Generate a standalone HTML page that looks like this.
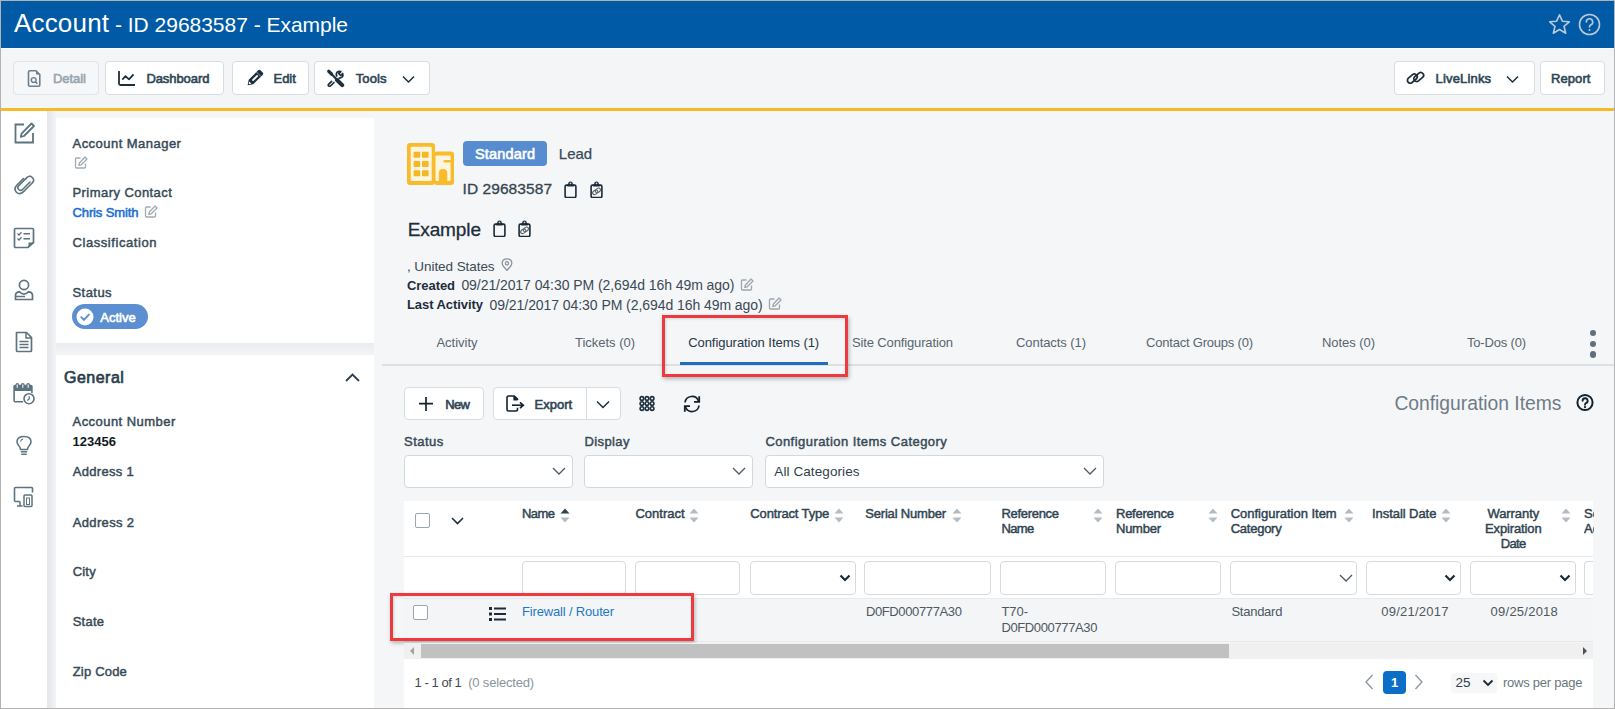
<!DOCTYPE html>
<html><head><meta charset="utf-8"><style>
html,body{margin:0;padding:0;}
body{width:1615px;height:709px;overflow:hidden;position:relative;background:#f5f6f8;font-family:"Liberation Sans",sans-serif;}
body>div,body>svg{position:absolute;}
.t{white-space:nowrap;}
#frame{left:0;top:0;width:1615px;height:709px;box-sizing:border-box;border-style:solid;border-color:#b3b3b3;border-width:1px;pointer-events:none;}
</style></head><body>
<div style="left:1px;top:1px;width:1613px;height:47px;background:#005aa5"></div>
<div style="left:1px;top:48px;width:1613px;height:1px;background:#fbfbfc"></div>
<div class="t" style="left:14.0px;top:9.99px;font-size:26px;line-height:26px;font-weight:400;color:#ffffff;letter-spacing:0.176px;">Account</div>
<div class="t" style="left:115.0px;top:14.22px;font-size:21px;line-height:21px;font-weight:400;color:#ffffff;letter-spacing:-0.020px;">- ID 29683587 - Example</div>
<svg style="left:1548px;top:13px;" width="23" height="22" viewBox="0 0 23 22"><path d="M11.5 1.8 L14.4 8.2 L21.3 8.8 L16 13.3 L17.7 20.2 L11.5 16.5 L5.3 20.2 L7 13.3 L1.7 8.8 L8.6 8.2 Z" fill="none" stroke="#b9c9dc" stroke-width="1.6" stroke-linejoin="round"/></svg>
<svg style="left:1578px;top:13px;" width="23" height="23" viewBox="0 0 23 23"><circle cx="11.5" cy="11.5" r="10" fill="none" stroke="#b9c9dc" stroke-width="1.6"/><path d="M8.3 9 A3.2 3.2 0 1 1 12.6 12 Q11.5 12.6 11.5 14" fill="none" stroke="#b9c9dc" stroke-width="1.6" stroke-linecap="round"/><circle cx="11.5" cy="17" r="1" fill="#b9c9dc"/></svg>
<div style="left:1px;top:49px;width:1613px;height:59px;background:#f4f5f7"></div>
<div style="left:13px;top:61px;width:86px;height:34px;background:#fff;border:1px solid #d8dde1;border-radius:4px;box-sizing:border-box"></div>
<div style="left:105px;top:61px;width:119px;height:34px;background:#fff;border:1px solid #d8dde1;border-radius:4px;box-sizing:border-box"></div>
<div style="left:232px;top:61px;width:77px;height:34px;background:#fff;border:1px solid #d8dde1;border-radius:4px;box-sizing:border-box"></div>
<div style="left:314px;top:61px;width:116px;height:34px;background:#fff;border:1px solid #d8dde1;border-radius:4px;box-sizing:border-box"></div>
<div style="left:13px;top:61px;width:86px;height:34px;background:#f6f7f9;border:1px solid #e1e5e8;border-radius:4px;box-sizing:border-box"></div>
<div style="left:1394px;top:61px;width:141px;height:34px;background:#fff;border:1px solid #d8dde1;border-radius:4px;box-sizing:border-box"></div>
<div style="left:1540px;top:61px;width:65px;height:34px;background:#fff;border:1px solid #d8dde1;border-radius:4px;box-sizing:border-box"></div>
<div class="t" style="left:53.0px;top:71.50px;font-size:13px;line-height:13px;font-weight:400;color:#98a5ae;-webkit-text-stroke:0.6px #98a5ae;letter-spacing:-0.047px;">Detail</div>
<div class="t" style="left:146.4px;top:71.50px;font-size:13px;line-height:13px;font-weight:400;color:#2e4655;-webkit-text-stroke:0.6px #2e4655;letter-spacing:-0.074px;">Dashboard</div>
<div class="t" style="left:273.5px;top:71.50px;font-size:13px;line-height:13px;font-weight:400;color:#2e4655;-webkit-text-stroke:0.6px #2e4655;letter-spacing:-0.034px;">Edit</div>
<div class="t" style="left:355.7px;top:71.50px;font-size:13px;line-height:13px;font-weight:400;color:#2e4655;-webkit-text-stroke:0.6px #2e4655;letter-spacing:0.113px;">Tools</div>
<div class="t" style="left:1435.6px;top:71.50px;font-size:13px;line-height:13px;font-weight:400;color:#2e4655;-webkit-text-stroke:0.6px #2e4655;letter-spacing:0.163px;">LiveLinks</div>
<div class="t" style="left:1551.0px;top:71.50px;font-size:13px;line-height:13px;font-weight:400;color:#2e4655;-webkit-text-stroke:0.6px #2e4655;letter-spacing:0.077px;">Report</div>
<div style="left:1px;top:108px;width:1613px;height:3px;background:#f7b928"></div>
<div style="left:1px;top:111px;width:46px;height:597px;background:#fff"></div>
<div style="left:47px;top:111px;width:9px;height:597px;background:linear-gradient(to right,#e3e5e8,#f3f4f6)"></div>
<div style="left:56px;top:118px;width:318px;height:225px;background:#fff"></div>
<div style="left:56px;top:343px;width:318px;height:12px;background:linear-gradient(#eaebee,#f3f4f6)"></div>
<div style="left:56px;top:355px;width:318px;height:353px;background:#fff"></div>
<div class="t" style="left:72.5px;top:136.50px;font-size:13px;line-height:13px;font-weight:400;color:#374a56;-webkit-text-stroke:0.45px #374a56;letter-spacing:0.465px;">Account Manager</div>
<div class="t" style="left:72.5px;top:186.00px;font-size:13px;line-height:13px;font-weight:400;color:#374a56;-webkit-text-stroke:0.45px #374a56;letter-spacing:0.437px;">Primary Contact</div>
<div class="t" style="left:72.5px;top:206.00px;font-size:13px;line-height:13px;font-weight:400;color:#2170d0;-webkit-text-stroke:0.55px #2170d0;letter-spacing:-0.118px;">Chris Smith</div>
<div class="t" style="left:72.5px;top:235.50px;font-size:13px;line-height:13px;font-weight:400;color:#374a56;-webkit-text-stroke:0.45px #374a56;letter-spacing:0.571px;">Classification</div>
<div class="t" style="left:72.5px;top:285.50px;font-size:13px;line-height:13px;font-weight:400;color:#374a56;-webkit-text-stroke:0.45px #374a56;letter-spacing:0.449px;">Status</div>
<div style="left:72px;top:304px;width:76px;height:25px;background:#5b8fd1;border-radius:13px"></div>
<svg style="left:76px;top:308px;" width="18" height="18" viewBox="0 0 18 18"><circle cx="9" cy="9" r="8.5" fill="#fff"/><path d="M5.2 9.2 L7.9 11.9 L12.9 6.6" fill="none" stroke="#5b8fd1" stroke-width="1.9" stroke-linecap="round" stroke-linejoin="round"/></svg>
<div class="t" style="left:100.2px;top:310.50px;font-size:13px;line-height:13px;font-weight:400;color:#ffffff;-webkit-text-stroke:0.6px #ffffff;letter-spacing:0.020px;">Active</div>
<div class="t" style="left:64.1px;top:370.06px;font-size:16px;line-height:16px;font-weight:400;color:#2b3f4c;-webkit-text-stroke:0.7px #2b3f4c;letter-spacing:0.464px;">General</div>
<svg style="left:344px;top:371px;" width="17" height="12" viewBox="0 0 17 12"><path d="M2 10 L8.5 3.5 L15 10" fill="none" stroke="#2b3f4c" stroke-width="1.8"/></svg>
<div class="t" style="left:72.5px;top:415.00px;font-size:13px;line-height:13px;font-weight:400;color:#374a56;-webkit-text-stroke:0.45px #374a56;letter-spacing:0.460px;">Account Number</div>
<div class="t" style="left:72.5px;top:435.30px;font-size:13px;line-height:13px;font-weight:700;color:#111a22;">123456</div>
<div class="t" style="left:72.7px;top:465.30px;font-size:13px;line-height:13px;font-weight:400;color:#374a56;-webkit-text-stroke:0.45px #374a56;letter-spacing:0.309px;">Address 1</div>
<div class="t" style="left:72.7px;top:515.50px;font-size:13px;line-height:13px;font-weight:400;color:#374a56;-webkit-text-stroke:0.45px #374a56;letter-spacing:0.359px;">Address 2</div>
<div class="t" style="left:72.7px;top:565.00px;font-size:13px;line-height:13px;font-weight:400;color:#374a56;-webkit-text-stroke:0.45px #374a56;letter-spacing:0.204px;">City</div>
<div class="t" style="left:72.7px;top:615.00px;font-size:13px;line-height:13px;font-weight:400;color:#374a56;-webkit-text-stroke:0.45px #374a56;letter-spacing:0.262px;">State</div>
<div class="t" style="left:72.7px;top:665.00px;font-size:13px;line-height:13px;font-weight:400;color:#374a56;-webkit-text-stroke:0.45px #374a56;letter-spacing:0.194px;">Zip Code</div>
<div style="left:463px;top:141px;width:84px;height:25px;background:#578dd0;border-radius:4px"></div>
<div class="t" style="left:474.9px;top:146.53px;font-size:14.5px;line-height:14.5px;font-weight:400;color:#fff;-webkit-text-stroke:0.6px #fff;letter-spacing:0.194px;">Standard</div>
<div class="t" style="left:558.8px;top:146.10px;font-size:15px;line-height:15px;font-weight:400;color:#3a4b57;-webkit-text-stroke:0.25px #3a4b57;letter-spacing:0.011px;">Lead</div>
<div class="t" style="left:462.5px;top:180.88px;font-size:15.5px;line-height:15.5px;font-weight:400;color:#34444f;-webkit-text-stroke:0.3px #34444f;letter-spacing:0.074px;">ID 29683587</div>
<div class="t" style="left:407.7px;top:220.22px;font-size:19px;line-height:19px;font-weight:400;color:#1d2d3a;-webkit-text-stroke:0.3px #1d2d3a;letter-spacing:-0.103px;">Example</div>
<div class="t" style="left:407.0px;top:260.07px;font-size:13.5px;line-height:13.5px;font-weight:400;color:#3b4a55;letter-spacing:-0.067px;">, United States</div>
<div class="t" style="left:407.0px;top:279.10px;font-size:13px;line-height:13px;font-weight:700;color:#1d2d3a;letter-spacing:-0.067px;">Created</div>
<div class="t" style="left:461.4px;top:278.25px;font-size:14px;line-height:14px;font-weight:400;color:#3b4a55;letter-spacing:-0.064px;">09/21/2017 04:30 PM (2,694d 16h 49m ago)</div>
<div class="t" style="left:407.0px;top:298.40px;font-size:13px;line-height:13px;font-weight:700;color:#1d2d3a;letter-spacing:-0.068px;">Last Activity</div>
<div class="t" style="left:489.6px;top:297.55px;font-size:14px;line-height:14px;font-weight:400;color:#3b4a55;letter-spacing:-0.064px;">09/21/2017 04:30 PM (2,694d 16h 49m ago)</div>
<svg style="left:26px;top:69px;" width="16" height="19" viewBox="0 0 16 19"><path d="M2.5 3 Q2.5 1.8 3.7 1.8 L10 1.8 L13.8 5.6 L13.8 16 Q13.8 17.2 12.6 17.2 L3.7 17.2 Q2.5 17.2 2.5 16 Z" fill="none" stroke="#6f7f8a" stroke-width="1.6"/><path d="M10 1.8 L10 5.6 L13.8 5.6 Z" fill="#6f7f8a"/><circle cx="7.7" cy="11" r="2.4" fill="none" stroke="#6f7f8a" stroke-width="1.4"/><path d="M9.4 12.7 L11.4 14.7" stroke="#6f7f8a" stroke-width="1.5"/></svg>
<svg style="left:117px;top:70px;" width="20" height="17" viewBox="0 0 20 17"><path d="M2 1 L2 13.5 Q2 15 3.5 15 L18 15" fill="none" stroke="#1d2f3c" stroke-width="1.8"/><path d="M5.3 9.6 L8.5 6.2 L12 9.4 L16.5 4.4" fill="none" stroke="#1d2f3c" stroke-width="1.7" stroke-linejoin="round"/></svg>
<svg style="left:244px;top:68px;" width="21" height="21" viewBox="0 0 21 21"><g transform="rotate(-45 10.5 10.5)"><path d="M5.5 7.3 L18.8 7.3 Q20.5 7.3 20.5 9 L20.5 12 Q20.5 13.7 18.8 13.7 L5.5 13.7 L0.8 10.5 Z" fill="#1d2f3c"/><rect x="7.5" y="9.6" width="7.5" height="1.9" rx=".7" fill="#fff"/><path d="M4.6 8.8 L2.2 10.5 L4.6 12.2 Z" fill="#fff"/><path d="M2.9 9.7 L1.5 10.5 L2.9 11.3 Z" fill="#1d2f3c"/><path d="M16.5 7.3 L16.5 13.7" stroke="#fff" stroke-width=".5"/></g></svg>
<svg style="left:326px;top:69px;" width="20" height="19" viewBox="0 0 20 19"><path d="M3.5 3 L16 15.8" stroke="#1d2f3c" stroke-width="2.2" stroke-linecap="round"/><path d="M11 11 L16.2 16.2" stroke="#1d2f3c" stroke-width="4" stroke-linecap="round"/><path d="M2.8 2.3 L5.5 5" stroke="#1d2f3c" stroke-width="3.2" stroke-linecap="round"/><path d="M5.6 12.3 L2.6 15.3 Q1.6 16.8 3.2 17.2 Q4.2 17.4 5 16.5 L8 13.5" fill="none" stroke="#1d2f3c" stroke-width="1.7" stroke-linecap="round"/><path d="M11 7.6 Q9.5 5 11.2 3.2 Q12.7 1.8 14.8 2.6 L12.8 4.6 L14.7 6.5 L16.7 4.5 Q17.5 6.6 16 8.2 Q14.5 9.5 12.5 9" fill="none" stroke="#1d2f3c" stroke-width="1.7" stroke-linejoin="round"/></svg>
<svg style="left:402px;top:75px;" width="13" height="9" viewBox="0 0 13 9"><path d="M1 1.5 L6.5 7 L12 1.5" fill="none" stroke="#1d2f3c" stroke-width="1.5"/></svg>
<svg style="left:1406px;top:70px;" width="20" height="16" viewBox="0 0 20 16"><g fill="none" stroke="#1d2f3c" stroke-width="1.7"><rect x="0.8" y="5.8" width="11" height="5.6" rx="2.8" transform="rotate(-40 6.3 8.6)"/><rect x="7.2" y="4.2" width="11" height="5.6" rx="2.8" transform="rotate(-40 12.7 7)"/></g></svg>
<svg style="left:1506px;top:75px;" width="13" height="9" viewBox="0 0 13 9"><path d="M1 1.5 L6.5 7 L12 1.5" fill="none" stroke="#1d2f3c" stroke-width="1.5"/></svg>
<svg style="left:12px;top:121px;" width="24" height="24" viewBox="0 0 24 24"><path d="M12 3.5 L3.5 3.5 L3.5 21.5 L21 21.5 L21 12" fill="none" stroke="#5d737f" stroke-width="1.8"/><path d="M19.5 2.5 L22 5 L12 15 L8.8 15.8 L9.6 12.6 Z" fill="none" stroke="#5d737f" stroke-width="1.8" stroke-linejoin="round"/></svg>
<svg style="left:13px;top:174px;" width="22" height="23" viewBox="0 0 22 23"><path d="M17 8 L9.5 15.5 Q7.6 17.4 5.7 15.5 Q3.8 13.6 5.7 11.7 L13.8 3.6 Q16.6 0.8 19.3 3.5 Q22 6.2 19.2 9 L10.8 17.4 Q6.7 21.5 3.4 18.2 Q0.1 14.9 4.2 10.8 L10.5 4.5" fill="none" stroke="#5d737f" stroke-width="1.6" stroke-linecap="round"/></svg>
<svg style="left:12px;top:226px;" width="24" height="24" viewBox="0 0 24 24"><path d="M2.5 3.5 Q2.5 2.5 3.5 2.5 L20.5 2.5 Q21.5 2.5 21.5 3.5 L21.5 16.5 L16 21.5 L3.5 21.5 Q2.5 21.5 2.5 20.5 Z" fill="none" stroke="#5d737f" stroke-width="1.7"/><path d="M21.5 16.5 L16.5 16.5 L16.5 21.5 Z" fill="#5d737f"/><path d="M5.5 7.5 L7 9 L9.5 6.2 M5.5 12.5 L7 14 L9.5 11.2" fill="none" stroke="#5d737f" stroke-width="1.3"/><path d="M11.5 7.8 L18 7.8 M11.5 12.8 L18 12.8" stroke="#5d737f" stroke-width="1.5"/></svg>
<svg style="left:13px;top:278px;" width="22" height="24" viewBox="0 0 22 24"><circle cx="11" cy="7" r="4.6" fill="none" stroke="#5d737f" stroke-width="1.7"/><path d="M2.5 21.5 L2.5 17.5 Q2.5 13.8 6.5 13.8 Q8.5 16.2 11 16.2 Q13.5 16.2 15.5 13.8 Q19.5 13.8 19.5 17.5 L19.5 21.5 Z" fill="none" stroke="#5d737f" stroke-width="1.7" stroke-linejoin="round"/><path d="M3 18.5 L12 18.5" stroke="#5d737f" stroke-width="1.5"/></svg>
<svg style="left:13px;top:330px;" width="22" height="23" viewBox="0 0 22 23"><path d="M3.5 2.5 L13.5 2.5 L18.5 7.5 L18.5 20.5 Q18.5 21.5 17.5 21.5 L4.5 21.5 Q3.5 21.5 3.5 20.5 Z" fill="none" stroke="#5d737f" stroke-width="1.7" stroke-linejoin="round"/><path d="M13 2.5 L13 8 L18.5 8" fill="none" stroke="#5d737f" stroke-width="1.5"/><path d="M6.5 11.5 L15.5 11.5 M6.5 14.5 L15.5 14.5 M6.5 17.5 L15.5 17.5" stroke="#5d737f" stroke-width="1.4"/></svg>
<svg style="left:12px;top:382px;" width="24" height="24" viewBox="0 0 24 24"><path d="M11 19.7 L3 19.7 Q2.1 19.7 2.1 18.8 L2.1 4.5 Q2.1 3.6 3 3.6 L19 3.6 Q19.9 3.6 19.9 4.5 L19.9 11" fill="none" stroke="#5d737f" stroke-width="1.6"/><rect x="2.1" y="3.6" width="17.8" height="5.4" fill="#5d737f"/><rect x="4.0" y="1.6" width="2.6" height="5" rx="1.3" fill="#cfd8dd" stroke="#5d737f" stroke-width="1.1"/><rect x="9.5" y="1.6" width="2.6" height="5" rx="1.3" fill="#cfd8dd" stroke="#5d737f" stroke-width="1.1"/><rect x="14.899999999999999" y="1.6" width="2.6" height="5" rx="1.3" fill="#cfd8dd" stroke="#5d737f" stroke-width="1.1"/><circle cx="17" cy="16.7" r="5" fill="#fff" stroke="#5d737f" stroke-width="1.6"/><path d="M17.2 14.2 L17.2 17 L15.3 18.6" fill="none" stroke="#5d737f" stroke-width="1.3"/></svg>
<svg style="left:15px;top:435px;" width="18" height="22" viewBox="0 0 18 22"><path d="M5.5 14.5 Q5.5 12.5 4 11 Q2 8.8 2 6.8 Q2 1.5 9 1.5 Q16 1.5 16 6.8 Q16 8.8 14 11 Q12.5 12.5 12.5 14.5 Z" fill="none" stroke="#5d737f" stroke-width="1.6" stroke-linejoin="round"/><path d="M5.8 16.8 L12.2 16.8 M6.3 19.3 L11.7 19.3" stroke="#5d737f" stroke-width="1.5"/><path d="M5.5 6.5 Q6 4.5 8 4" fill="none" stroke="#5d737f" stroke-width="1.1"/></svg>
<svg style="left:12px;top:485px;" width="24" height="24" viewBox="0 0 24 24"><path d="M20.5 7.5 L20.5 3.5 Q20.5 2.5 19.5 2.5 L3.5 2.5 Q2.5 2.5 2.5 3.5 L2.5 15.5 Q2.5 16.5 3.5 16.5 L8 16.5" fill="none" stroke="#5d737f" stroke-width="1.6"/><path d="M5 21 L10.5 21 M8 16.5 L8 21" stroke="#5d737f" stroke-width="1.5"/><rect x="12" y="10" width="8" height="11.5" rx="1" fill="none" stroke="#5d737f" stroke-width="1.5"/><rect x="14.5" y="13" width="3" height="6.5" fill="none" stroke="#5d737f" stroke-width="1"/></svg>
<svg style="left:74px;top:156px;" width="14" height="13" viewBox="0 0 14 13"><path d="M6.5 2 L2.5 2 Q1.5 2 1.5 3 L1.5 11 Q1.5 12 2.5 12 L10.5 12 Q11.5 12 11.5 11 L11.5 7.5" fill="none" stroke="#a3abb2" stroke-width="1.3"/><path d="M11 1 L13 3 L7.2 8.8 L4.8 9.4 L5.4 7 Z" fill="none" stroke="#a3abb2" stroke-width="1.3" stroke-linejoin="round"/></svg>
<svg style="left:144px;top:205px;" width="14" height="13" viewBox="0 0 14 13"><path d="M6.5 2 L2.5 2 Q1.5 2 1.5 3 L1.5 11 Q1.5 12 2.5 12 L10.5 12 Q11.5 12 11.5 11 L11.5 7.5" fill="none" stroke="#a3abb2" stroke-width="1.3"/><path d="M11 1 L13 3 L7.2 8.8 L4.8 9.4 L5.4 7 Z" fill="none" stroke="#a3abb2" stroke-width="1.3" stroke-linejoin="round"/></svg>
<svg style="left:740px;top:278px;" width="14" height="13" viewBox="0 0 14 13"><path d="M6.5 2 L2.5 2 Q1.5 2 1.5 3 L1.5 11 Q1.5 12 2.5 12 L10.5 12 Q11.5 12 11.5 11 L11.5 7.5" fill="none" stroke="#9ea5ab" stroke-width="1.3"/><path d="M11 1 L13 3 L7.2 8.8 L4.8 9.4 L5.4 7 Z" fill="none" stroke="#9ea5ab" stroke-width="1.3" stroke-linejoin="round"/></svg>
<svg style="left:768px;top:297px;" width="14" height="13" viewBox="0 0 14 13"><path d="M6.5 2 L2.5 2 Q1.5 2 1.5 3 L1.5 11 Q1.5 12 2.5 12 L10.5 12 Q11.5 12 11.5 11 L11.5 7.5" fill="none" stroke="#9ea5ab" stroke-width="1.3"/><path d="M11 1 L13 3 L7.2 8.8 L4.8 9.4 L5.4 7 Z" fill="none" stroke="#9ea5ab" stroke-width="1.3" stroke-linejoin="round"/></svg>
<svg style="left:501px;top:258px;" width="12" height="13" viewBox="0 0 12 13"><path d="M6 12.3 Q1.2 7.5 1.2 5.2 Q1.2 0.8 6 0.8 Q10.8 0.8 10.8 5.2 Q10.8 7.5 6 12.3 Z" fill="none" stroke="#8b939a" stroke-width="1.3" stroke-linejoin="round"/><circle cx="6" cy="5.2" r="1.6" fill="none" stroke="#8b939a" stroke-width="1.2"/></svg>
<svg style="left:407px;top:143px;" width="47" height="42" viewBox="0 0 47 42"><rect x="0" y="0" width="28" height="42" rx="3" fill="#f8bb2a"/><rect x="3.7" y="3.7" width="21" height="34.3" rx="1" fill="#fdf5dd"/><rect x="6.6" y="8.8" width="6.6" height="6" rx=".8" fill="#f5b728"/><rect x="6.6" y="18" width="6.6" height="6" rx=".8" fill="#f5b728"/><rect x="6.6" y="27.2" width="6.6" height="6" rx=".8" fill="#f5b728"/><rect x="15" y="8.8" width="6.6" height="6" rx=".8" fill="#f5b728"/><rect x="15" y="18" width="6.6" height="6" rx=".8" fill="#f5b728"/><rect x="15" y="27.2" width="6.6" height="6" rx=".8" fill="#f5b728"/><rect x="27" y="8.5" width="20" height="33.5" rx="3" fill="#f8bb2a"/><rect x="28.5" y="12.5" width="15.1" height="25.5" rx="1" fill="#fdf5dd"/><path d="M31.8 38 L31.8 30 Q31.8 26 36 26 Q40.3 26 40.3 30 L40.3 38 Z" fill="#f8bb2a"/><rect x="36.5" y="17" width="7.5" height="2.6" rx="1.3" fill="#f8bb2a"/></svg>
<svg style="left:564px;top:180.5px;" width="13" height="17" viewBox="0 0 13 17"><path d="M2.5 4.1 L10.5 4.1 Q11.9 4.1 11.9 5.5 L11.9 15.1 Q11.9 16.5 10.5 16.5 L2.5 16.5 Q1.1 16.5 1.1 15.1 L1.1 5.5 Q1.1 4.1 2.5 4.1 Z" fill="none" stroke="#1b2a37" stroke-width="1.6"/><path d="M3.2 5.4 L9.8 5.4 L9.8 3.4 L8.9 3.4 Q8.9 0.4 6.5 0.4 Q4.1 0.4 4.1 3.4 L3.2 3.4 Z" fill="#1b2a37"/><circle cx="6.5" cy="2.3" r=".9" fill="#c9d0d6"/></svg>
<svg style="left:589.5px;top:180.5px;" width="13" height="17" viewBox="0 0 13 17"><path d="M2.5 4.1 L10.5 4.1 Q11.9 4.1 11.9 5.5 L11.9 15.1 Q11.9 16.5 10.5 16.5 L2.5 16.5 Q1.1 16.5 1.1 15.1 L1.1 5.5 Q1.1 4.1 2.5 4.1 Z" fill="none" stroke="#1b2a37" stroke-width="1.6"/><path d="M3.2 5.4 L9.8 5.4 L9.8 3.4 L8.9 3.4 Q8.9 0.4 6.5 0.4 Q4.1 0.4 4.1 3.4 L3.2 3.4 Z" fill="#1b2a37"/><circle cx="6.5" cy="2.3" r=".9" fill="#c9d0d6"/><g fill="none" stroke="#5f676e" stroke-width="1.1"><ellipse cx="5.2" cy="11.3" rx="2.8" ry="1.9" transform="rotate(-35 5.2 11.3)"/><ellipse cx="7.9" cy="9.4" rx="2.8" ry="1.9" transform="rotate(-35 7.9 9.4)"/></g></svg>
<svg style="left:493px;top:219.5px;" width="13" height="17" viewBox="0 0 13 17"><path d="M2.5 4.1 L10.5 4.1 Q11.9 4.1 11.9 5.5 L11.9 15.1 Q11.9 16.5 10.5 16.5 L2.5 16.5 Q1.1 16.5 1.1 15.1 L1.1 5.5 Q1.1 4.1 2.5 4.1 Z" fill="none" stroke="#1b2a37" stroke-width="1.6"/><path d="M3.2 5.4 L9.8 5.4 L9.8 3.4 L8.9 3.4 Q8.9 0.4 6.5 0.4 Q4.1 0.4 4.1 3.4 L3.2 3.4 Z" fill="#1b2a37"/><circle cx="6.5" cy="2.3" r=".9" fill="#c9d0d6"/></svg>
<svg style="left:518px;top:219.5px;" width="13" height="17" viewBox="0 0 13 17"><path d="M2.5 4.1 L10.5 4.1 Q11.9 4.1 11.9 5.5 L11.9 15.1 Q11.9 16.5 10.5 16.5 L2.5 16.5 Q1.1 16.5 1.1 15.1 L1.1 5.5 Q1.1 4.1 2.5 4.1 Z" fill="none" stroke="#1b2a37" stroke-width="1.6"/><path d="M3.2 5.4 L9.8 5.4 L9.8 3.4 L8.9 3.4 Q8.9 0.4 6.5 0.4 Q4.1 0.4 4.1 3.4 L3.2 3.4 Z" fill="#1b2a37"/><circle cx="6.5" cy="2.3" r=".9" fill="#c9d0d6"/><g fill="none" stroke="#5f676e" stroke-width="1.1"><ellipse cx="5.2" cy="11.3" rx="2.8" ry="1.9" transform="rotate(-35 5.2 11.3)"/><ellipse cx="7.9" cy="9.4" rx="2.8" ry="1.9" transform="rotate(-35 7.9 9.4)"/></g></svg>
<div style="left:382px;top:364px;width:1233px;height:2px;background:#dcdfe3"></div>
<div class="t" style="left:436.4px;top:335.80px;font-size:13px;line-height:13px;font-weight:400;color:#58656f;">Activity</div>
<div class="t" style="left:575.0px;top:335.80px;font-size:13px;line-height:13px;font-weight:400;color:#58656f;letter-spacing:-0.019px;">Tickets (0)</div>
<div class="t" style="left:852.0px;top:335.80px;font-size:13px;line-height:13px;font-weight:400;color:#58656f;letter-spacing:-0.137px;">Site Configuration</div>
<div class="t" style="left:1016.0px;top:335.80px;font-size:13px;line-height:13px;font-weight:400;color:#58656f;letter-spacing:-0.072px;">Contacts (1)</div>
<div class="t" style="left:1146.0px;top:335.80px;font-size:13px;line-height:13px;font-weight:400;color:#58656f;letter-spacing:-0.208px;">Contact Groups (0)</div>
<div class="t" style="left:1322.0px;top:335.80px;font-size:13px;line-height:13px;font-weight:400;color:#58656f;letter-spacing:-0.057px;">Notes (0)</div>
<div class="t" style="left:1467.0px;top:335.80px;font-size:13px;line-height:13px;font-weight:400;color:#58656f;letter-spacing:-0.186px;">To-Dos (0)</div>
<div class="t" style="left:688.2px;top:335.80px;font-size:13px;line-height:13px;font-weight:400;color:#263746;letter-spacing:-0.055px;">Configuration Items (1)</div>
<div style="left:680px;top:362px;width:148px;height:3px;background:#1f6dc4"></div>
<div style="left:1589.8px;top:329.95px;width:6.5px;height:6.5px;background:#5d6f80;border-radius:50%"></div>
<div style="left:1589.8px;top:340.75px;width:6.5px;height:6.5px;background:#5d6f80;border-radius:50%"></div>
<div style="left:1589.8px;top:351.25px;width:6.5px;height:6.5px;background:#5d6f80;border-radius:50%"></div>
<div style="left:662px;top:315px;width:186px;height:62px;border:3px solid #ee3a3f;box-sizing:border-box;box-shadow:1px 2px 4px rgba(0,0,0,.28), inset 1px 1px 3px rgba(0,0,0,.12)"></div>
<div style="left:404px;top:387px;width:80px;height:33px;background:#fff;border:1px solid #d8dde1;border-radius:4px;box-sizing:border-box"></div>
<div style="left:493px;top:387px;width:128px;height:33px;background:#fff;border:1px solid #d8dde1;border-radius:4px;box-sizing:border-box"></div>
<div style="left:586px;top:388px;width:1px;height:31px;background:#d8dde1"></div>
<div class="t" style="left:445.3px;top:398.00px;font-size:13px;line-height:13px;font-weight:400;color:#2e4655;-webkit-text-stroke:0.6px #2e4655;letter-spacing:-0.653px;">New</div>
<div class="t" style="left:534.5px;top:398.00px;font-size:13px;line-height:13px;font-weight:400;color:#2e4655;-webkit-text-stroke:0.6px #2e4655;letter-spacing:0.006px;">Export</div>
<svg style="left:418px;top:396px;" width="16" height="16" viewBox="0 0 16 16"><path d="M8 1 L8 15 M1 7.6 L15 7.6" stroke="#13222e" stroke-width="1.7"/></svg>
<svg style="left:506px;top:395px;" width="19" height="17" viewBox="0 0 19 17"><path d="M11.5 5 L11.5 4.2 L8.3 1 L2.7 1 Q1 1 1 2.7 L1 14.3 Q1 16 2.7 16 L9.8 16 Q11.5 16 11.5 14.3 L11.5 12.8" fill="none" stroke="#13222e" stroke-width="1.6"/><path d="M8 1 L8 5 L11.5 5" fill="#13222e" stroke="#13222e" stroke-width="1.2"/><path d="M6 10.2 L16.5 10.2" stroke="#13222e" stroke-width="1.6"/><path d="M14 7.3 L17.3 10.2 L14 13.1" fill="none" stroke="#13222e" stroke-width="1.7"/></svg>
<svg style="left:596px;top:400px;" width="14" height="10" viewBox="0 0 14 10"><path d="M1 1.5 L7 7.5 L13 1.5" fill="none" stroke="#1d2f3c" stroke-width="1.5"/></svg>
<svg style="left:639px;top:395px;" width="18" height="18" viewBox="0 0 18 18"><circle cx="2.9" cy="3.4" r="1.8" fill="none" stroke="#1d2f3c" stroke-width="1.6"/><circle cx="2.9" cy="8.5" r="1.8" fill="none" stroke="#1d2f3c" stroke-width="1.6"/><circle cx="2.9" cy="13.6" r="1.8" fill="none" stroke="#1d2f3c" stroke-width="1.6"/><circle cx="8.0" cy="3.4" r="1.8" fill="none" stroke="#1d2f3c" stroke-width="1.6"/><circle cx="8.0" cy="8.5" r="1.8" fill="none" stroke="#1d2f3c" stroke-width="1.6"/><circle cx="8.0" cy="13.6" r="1.8" fill="none" stroke="#1d2f3c" stroke-width="1.6"/><circle cx="13.1" cy="3.4" r="1.8" fill="none" stroke="#1d2f3c" stroke-width="1.6"/><circle cx="13.1" cy="8.5" r="1.8" fill="none" stroke="#1d2f3c" stroke-width="1.6"/><circle cx="13.1" cy="13.6" r="1.8" fill="none" stroke="#1d2f3c" stroke-width="1.6"/></svg>
<svg style="left:683px;top:395px;" width="18" height="18" viewBox="0 0 18 18"><path d="M2 7.5 A7 7 0 0 1 15.5 6" fill="none" stroke="#13222e" stroke-width="1.7"/><path d="M16.2 1.2 L16.2 6.8 L11 6.8" fill="none" stroke="#13222e" stroke-width="1.8"/><path d="M16 10.5 A7 7 0 0 1 2.5 12" fill="none" stroke="#13222e" stroke-width="1.7"/><path d="M1.8 16.8 L1.8 11.2 L7 11.2" fill="none" stroke="#13222e" stroke-width="1.8"/></svg>
<svg style="left:1575px;top:393px;" width="20" height="19" viewBox="0 0 20 19"><circle cx="10" cy="9.5" r="7.6" fill="none" stroke="#13222e" stroke-width="2"/><path d="M7.6 7.8 A2.5 2.5 0 1 1 10.7 10.2 Q10 10.6 10 11.8" fill="none" stroke="#13222e" stroke-width="1.9" stroke-linecap="round"/><circle cx="10" cy="14.1" r="1.15" fill="#13222e"/></svg>
<div class="t" style="left:1394.4px;top:394.36px;font-size:19.3px;line-height:19.3px;font-weight:400;color:#6e7c86;letter-spacing:-0.008px;">Configuration Items</div>
<div class="t" style="left:404.0px;top:435.40px;font-size:13px;line-height:13px;font-weight:400;color:#374a56;-webkit-text-stroke:0.45px #374a56;letter-spacing:0.469px;">Status</div>
<div class="t" style="left:584.5px;top:435.40px;font-size:13px;line-height:13px;font-weight:400;color:#374a56;-webkit-text-stroke:0.45px #374a56;letter-spacing:0.396px;">Display</div>
<div class="t" style="left:765.4px;top:435.40px;font-size:13px;line-height:13px;font-weight:400;color:#374a56;-webkit-text-stroke:0.45px #374a56;letter-spacing:0.457px;">Configuration Items Category</div>
<div style="left:404px;top:455px;width:169px;height:33px;background:#fff;border:1px solid #d3d8dc;border-radius:4px;box-sizing:border-box"></div>
<div style="left:584px;top:455px;width:169px;height:33px;background:#fff;border:1px solid #d3d8dc;border-radius:4px;box-sizing:border-box"></div>
<div style="left:765px;top:455px;width:339px;height:33px;background:#fff;border:1px solid #d3d8dc;border-radius:4px;box-sizing:border-box"></div>
<div class="t" style="left:774.3px;top:465.07px;font-size:13.5px;line-height:13.5px;font-weight:400;color:#2e3f4b;letter-spacing:0.090px;">All Categories</div>
<div style="left:404px;top:501px;width:1189px;height:55px;background:#fff"></div>
<div style="left:404px;top:556px;width:1189px;height:1px;background:#e6e9ec"></div>
<div style="left:404px;top:557px;width:1189px;height:41px;background:#fff"></div>
<div style="left:404px;top:598px;width:1189px;height:1px;background:#e9ecef"></div>
<div style="left:404px;top:599px;width:1189px;height:42px;background:#f4f5f7"></div>
<div style="left:404px;top:641px;width:1189px;height:1px;background:#e6e9ec"></div>
<div style="left:415px;top:513px;width:15px;height:15px;border:1.5px solid #9aa6ae;border-radius:2px;box-sizing:border-box;background:#fff"></div>
<svg style="left:450px;top:516px;" width="15" height="10" viewBox="0 0 15 10"><path d="M2 2 L7.5 7.5 L13 2" fill="none" stroke="#1f2f3b" stroke-width="1.6"/></svg>
<div class="t" style="left:522.0px;top:507.00px;font-size:13px;line-height:13px;font-weight:400;color:#2f4350;-webkit-text-stroke:0.45px #2f4350;letter-spacing:-0.558px;">Name</div>
<svg style="left:560px;top:507px;" width="10" height="17" viewBox="0 0 10 17"><path d="M0.5 6.5 L5 1.5 L9.5 6.5 Z" fill="#2f4350"/><path d="M0.5 10.5 L5 15.5 L9.5 10.5 Z" fill="#b4bcc2"/></svg>
<div class="t" style="left:635.5px;top:507.00px;font-size:13px;line-height:13px;font-weight:400;color:#2f4350;-webkit-text-stroke:0.45px #2f4350;letter-spacing:-0.018px;">Contract</div>
<svg style="left:688.5px;top:507px;" width="10" height="17" viewBox="0 0 10 17"><path d="M0.5 6.5 L5 1.5 L9.5 6.5 Z" fill="#b4bcc2"/><path d="M0.5 10.5 L5 15.5 L9.5 10.5 Z" fill="#b4bcc2"/></svg>
<div class="t" style="left:750.3px;top:507.00px;font-size:13px;line-height:13px;font-weight:400;color:#2f4350;-webkit-text-stroke:0.45px #2f4350;letter-spacing:-0.140px;">Contract Type</div>
<svg style="left:834px;top:507px;" width="10" height="17" viewBox="0 0 10 17"><path d="M0.5 6.5 L5 1.5 L9.5 6.5 Z" fill="#b4bcc2"/><path d="M0.5 10.5 L5 15.5 L9.5 10.5 Z" fill="#b4bcc2"/></svg>
<div class="t" style="left:865.2px;top:507.00px;font-size:13px;line-height:13px;font-weight:400;color:#2f4350;-webkit-text-stroke:0.45px #2f4350;letter-spacing:-0.173px;">Serial Number</div>
<svg style="left:952px;top:507px;" width="10" height="17" viewBox="0 0 10 17"><path d="M0.5 6.5 L5 1.5 L9.5 6.5 Z" fill="#b4bcc2"/><path d="M0.5 10.5 L5 15.5 L9.5 10.5 Z" fill="#b4bcc2"/></svg>
<div class="t" style="left:1001.4px;top:507.00px;font-size:13px;line-height:13px;font-weight:400;color:#2f4350;-webkit-text-stroke:0.45px #2f4350;letter-spacing:-0.297px;">Reference</div>
<div class="t" style="left:1001.4px;top:522.20px;font-size:13px;line-height:13px;font-weight:400;color:#2f4350;-webkit-text-stroke:0.45px #2f4350;letter-spacing:-0.625px;">Name</div>
<svg style="left:1093px;top:507px;" width="10" height="17" viewBox="0 0 10 17"><path d="M0.5 6.5 L5 1.5 L9.5 6.5 Z" fill="#b4bcc2"/><path d="M0.5 10.5 L5 15.5 L9.5 10.5 Z" fill="#b4bcc2"/></svg>
<div class="t" style="left:1116.0px;top:507.00px;font-size:13px;line-height:13px;font-weight:400;color:#2f4350;-webkit-text-stroke:0.45px #2f4350;letter-spacing:-0.247px;">Reference</div>
<div class="t" style="left:1116.0px;top:522.20px;font-size:13px;line-height:13px;font-weight:400;color:#2f4350;-webkit-text-stroke:0.45px #2f4350;letter-spacing:-0.247px;">Number</div>
<svg style="left:1207.5px;top:507px;" width="10" height="17" viewBox="0 0 10 17"><path d="M0.5 6.5 L5 1.5 L9.5 6.5 Z" fill="#b4bcc2"/><path d="M0.5 10.5 L5 15.5 L9.5 10.5 Z" fill="#b4bcc2"/></svg>
<div class="t" style="left:1230.7px;top:507.00px;font-size:13px;line-height:13px;font-weight:400;color:#2f4350;-webkit-text-stroke:0.45px #2f4350;letter-spacing:-0.013px;">Configuration Item</div>
<div class="t" style="left:1230.7px;top:522.20px;font-size:13px;line-height:13px;font-weight:400;color:#2f4350;-webkit-text-stroke:0.45px #2f4350;letter-spacing:-0.249px;">Category</div>
<svg style="left:1343.5px;top:507px;" width="10" height="17" viewBox="0 0 10 17"><path d="M0.5 6.5 L5 1.5 L9.5 6.5 Z" fill="#b4bcc2"/><path d="M0.5 10.5 L5 15.5 L9.5 10.5 Z" fill="#b4bcc2"/></svg>
<div class="t" style="left:1372.0px;top:507.00px;font-size:13px;line-height:13px;font-weight:400;color:#2f4350;-webkit-text-stroke:0.45px #2f4350;letter-spacing:-0.057px;">Install Date</div>
<svg style="left:1441px;top:507px;" width="10" height="17" viewBox="0 0 10 17"><path d="M0.5 6.5 L5 1.5 L9.5 6.5 Z" fill="#b4bcc2"/><path d="M0.5 10.5 L5 15.5 L9.5 10.5 Z" fill="#b4bcc2"/></svg>
<div class="t" style="left:1487.5px;top:507.00px;font-size:13px;line-height:13px;font-weight:400;color:#2f4350;-webkit-text-stroke:0.45px #2f4350;letter-spacing:-0.078px;">Warranty</div>
<div class="t" style="left:1485.0px;top:522.20px;font-size:13px;line-height:13px;font-weight:400;color:#2f4350;-webkit-text-stroke:0.45px #2f4350;letter-spacing:-0.123px;">Expiration</div>
<div class="t" style="left:1500.8px;top:537.40px;font-size:13px;line-height:13px;font-weight:400;color:#2f4350;-webkit-text-stroke:0.45px #2f4350;letter-spacing:-0.653px;">Date</div>
<svg style="left:1561px;top:507px;" width="10" height="17" viewBox="0 0 10 17"><path d="M0.5 6.5 L5 1.5 L9.5 6.5 Z" fill="#b4bcc2"/><path d="M0.5 10.5 L5 15.5 L9.5 10.5 Z" fill="#b4bcc2"/></svg>
<div style="left:1584px;top:500px;width:9.5px;height:50px;overflow:hidden"><div class="t" style="position:absolute;left:0;top:5.9px;font-size:13px;line-height:15.2px;font-weight:400;-webkit-text-stroke:.45px #2f4350;color:#2f4350">Serial<br>Active</div></div>
<div style="left:522px;top:561px;width:104px;height:34px;background:#fff;border:1px solid #d5dade;border-radius:4px;box-sizing:border-box"></div>
<div style="left:635px;top:561px;width:105px;height:34px;background:#fff;border:1px solid #d5dade;border-radius:4px;box-sizing:border-box"></div>
<div style="left:750px;top:561px;width:106px;height:34px;background:#fff;border:1px solid #d5dade;border-radius:4px;box-sizing:border-box"></div>
<div style="left:864px;top:561px;width:127px;height:34px;background:#fff;border:1px solid #d5dade;border-radius:4px;box-sizing:border-box"></div>
<div style="left:1000px;top:561px;width:106px;height:34px;background:#fff;border:1px solid #d5dade;border-radius:4px;box-sizing:border-box"></div>
<div style="left:1115px;top:561px;width:106px;height:34px;background:#fff;border:1px solid #d5dade;border-radius:4px;box-sizing:border-box"></div>
<div style="left:1230px;top:561px;width:127px;height:34px;background:#fff;border:1px solid #d5dade;border-radius:4px;box-sizing:border-box"></div>
<div style="left:1366px;top:561px;width:95px;height:34px;background:#fff;border:1px solid #d5dade;border-radius:4px;box-sizing:border-box"></div>
<div style="left:1470px;top:561px;width:106px;height:34px;background:#fff;border:1px solid #d5dade;border-radius:4px;box-sizing:border-box"></div>
<div style="left:1584px;top:561px;width:9px;height:34px;background:#fff;border:1px solid #d5dade;border-radius:4px;box-sizing:border-box;border-right:none;border-radius:4px 0 0 4px"></div>
<svg style="left:839px;top:574px;" width="12" height="8" viewBox="0 0 12 8"><path d="M1.5 1.5 L6 6 L10.5 1.5" fill="none" stroke="#1c2b36" stroke-width="2.2"/></svg>
<svg style="left:1339px;top:574px;" width="14" height="8" viewBox="0 0 14 8"><path d="M1 1 L7 7 L13 1" fill="none" stroke="#4a5a66" stroke-width="1.3"/></svg>
<svg style="left:1444px;top:574px;" width="12" height="8" viewBox="0 0 12 8"><path d="M1.5 1.5 L6 6 L10.5 1.5" fill="none" stroke="#1c2b36" stroke-width="2.2"/></svg>
<svg style="left:1559px;top:574px;" width="12" height="8" viewBox="0 0 12 8"><path d="M1.5 1.5 L6 6 L10.5 1.5" fill="none" stroke="#1c2b36" stroke-width="2.2"/></svg>
<svg style="left:552px;top:467px;" width="14" height="8" viewBox="0 0 14 8"><path d="M1 1 L7 7 L13 1" fill="none" stroke="#4a5a66" stroke-width="1.3"/></svg>
<svg style="left:732px;top:467px;" width="14" height="8" viewBox="0 0 14 8"><path d="M1 1 L7 7 L13 1" fill="none" stroke="#4a5a66" stroke-width="1.3"/></svg>
<svg style="left:1083px;top:467px;" width="14" height="8" viewBox="0 0 14 8"><path d="M1 1 L7 7 L13 1" fill="none" stroke="#4a5a66" stroke-width="1.3"/></svg>
<div style="left:413px;top:605px;width:15px;height:15px;border:1.5px solid #9aa6ae;border-radius:2px;box-sizing:border-box;background:#fff"></div>
<svg style="left:489px;top:606px;" width="18" height="16" viewBox="0 0 18 16"><rect x="0" y="1" width="3" height="3" fill="#1d2b36"/><rect x="0" y="6.5" width="3" height="3" fill="#1d2b36"/><rect x="0" y="12" width="3" height="3" fill="#1d2b36"/><rect x="5" y="1.5" width="12" height="2" fill="#1d2b36"/><rect x="5" y="7" width="12" height="2" fill="#1d2b36"/><rect x="5" y="12.5" width="12" height="2" fill="#1d2b36"/></svg>
<div class="t" style="left:522.0px;top:605.40px;font-size:13px;line-height:13px;font-weight:400;color:#1d78c3;letter-spacing:-0.164px;">Firewall / Router</div>
<div class="t" style="left:865.9px;top:605.40px;font-size:13px;line-height:13px;font-weight:400;color:#4d5861;letter-spacing:-0.371px;">D0FD000777A30</div>
<div class="t" style="left:1001.4px;top:605.40px;font-size:13px;line-height:13px;font-weight:400;color:#4d5861;">T70-</div>
<div class="t" style="left:1001.4px;top:620.50px;font-size:13px;line-height:13px;font-weight:400;color:#4d5861;letter-spacing:-0.371px;">D0FD000777A30</div>
<div class="t" style="left:1231.4px;top:605.40px;font-size:13px;line-height:13px;font-weight:400;color:#4d5861;letter-spacing:-0.251px;">Standard</div>
<div class="t" style="left:1381.3px;top:605.40px;font-size:13px;line-height:13px;font-weight:400;color:#4d5861;letter-spacing:0.238px;">09/21/2017</div>
<div class="t" style="left:1490.6px;top:605.40px;font-size:13px;line-height:13px;font-weight:400;color:#4d5861;letter-spacing:0.238px;">09/25/2018</div>
<div style="left:390px;top:593px;width:304px;height:48px;border:3px solid #ee3a3f;box-sizing:border-box;box-shadow:1px 2px 4px rgba(0,0,0,.28), inset 1px 1px 3px rgba(0,0,0,.12)"></div>
<div style="left:404px;top:643px;width:1189px;height:16px;background:#f0f0f0"></div>
<div style="left:421px;top:644px;width:808px;height:14px;background:#c1c1c1"></div>
<svg style="left:409px;top:647px;" width="6" height="8" viewBox="0 0 6 8"><path d="M5 0 L1 4 L5 8 Z" fill="#a3a3a3"/></svg>
<svg style="left:1582px;top:647px;" width="6" height="8" viewBox="0 0 6 8"><path d="M1 0 L5 4 L1 8 Z" fill="#505050"/></svg>
<div style="left:404px;top:659px;width:1189px;height:49px;background:#fff"></div>
<div class="t" style="left:414.5px;top:675.80px;font-size:13px;line-height:13px;font-weight:400;color:#3e4b55;letter-spacing:-0.445px;">1 - 1 of 1</div>
<div class="t" style="left:468.2px;top:675.80px;font-size:13px;line-height:13px;font-weight:400;color:#8a949b;letter-spacing:-0.174px;">(0 selected)</div>
<svg style="left:1364px;top:674px;" width="10" height="16" viewBox="0 0 10 16"><path d="M8.5 1 L2 8 L8.5 15" fill="none" stroke="#8e99a1" stroke-width="1.4"/></svg>
<div style="left:1383px;top:671px;width:23px;height:23px;background:#0b6fc7;border-radius:4px"></div>
<div class="t" style="left:1390.9px;top:676.00px;font-size:13px;line-height:13px;font-weight:700;color:#fff;">1</div>
<svg style="left:1414px;top:674px;" width="10" height="16" viewBox="0 0 10 16"><path d="M1.5 1 L8 8 L1.5 15" fill="none" stroke="#8e99a1" stroke-width="1.4"/></svg>
<div style="left:1451px;top:673px;width:46px;height:19px;background:#f6f7f8;border-radius:3px;box-shadow:0 1px 2px rgba(0,0,0,.04)"></div>
<div class="t" style="left:1455.4px;top:675.97px;font-size:13.5px;line-height:13.5px;font-weight:400;color:#333d45;">25</div>
<svg style="left:1482px;top:679px;" width="12" height="8" viewBox="0 0 12 8"><path d="M1.5 1.5 L6 6 L10.5 1.5" fill="none" stroke="#1c2b36" stroke-width="1.9"/></svg>
<div class="t" style="left:1503.0px;top:675.80px;font-size:13px;line-height:13px;font-weight:400;color:#6a767f;letter-spacing:-0.239px;">rows per page</div>
<div id="frame"></div>
</body></html>
